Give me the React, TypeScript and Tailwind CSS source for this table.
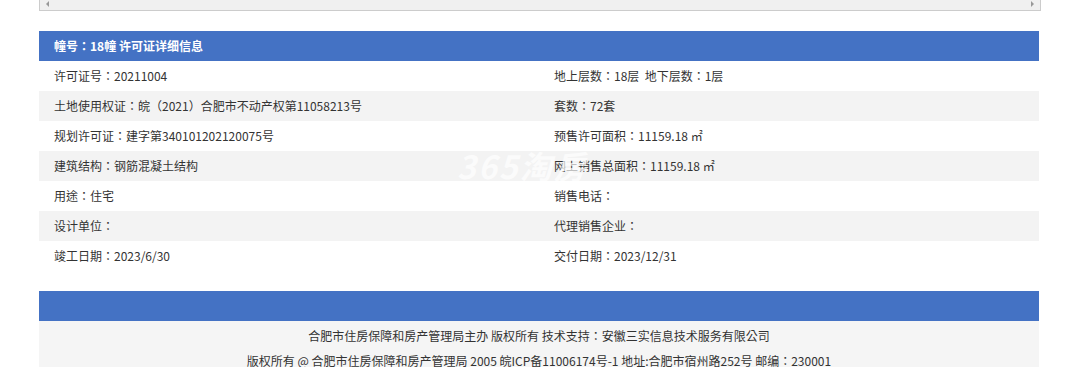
import React from 'react';

const rows: [string, string][] = [
  ['许可证号：20211004', '地上层数：18层\u00a0\u00a0地下层数：1层'],
  ['土地使用权证：皖（2021）合肥市不动产权第11058213号', '套数：72套'],
  ['规划许可证：建字第340101202120075号', '预售许可面积：11159.18 ㎡'],
  ['建筑结构：钢筋混凝土结构', '网上销售总面积：11159.18 ㎡'],
  ['用途：住宅', '销售电话：'],
  ['设计单位：', '代理销售企业：'],
  ['竣工日期：2023/6/30', '交付日期：2023/12/31'],
];

export default function App() {
  return (
    <div
      className="w-[1083px] h-[367px] overflow-hidden bg-white text-[12px] text-[#333]"
      style={{ fontFamily: '"Microsoft YaHei", "Noto Sans CJK TC", "Noto Sans", sans-serif' }}
    >
      {/* 横向滚动条 */}
      <div className="ml-[39px] w-[1002px] h-[11px] bg-[#f0f0f0] border-l border-r border-b border-[#cccccc] flex items-start justify-between px-[6px]">
        <span className="mt-[1px] w-0 h-0 border-t-[3px] border-b-[3px] border-r-[3px] border-t-transparent border-b-transparent border-r-[#999]" />
        <span className="mt-[1px] w-0 h-0 border-t-[3px] border-b-[3px] border-l-[3px] border-t-transparent border-b-transparent border-l-[#999]" />
      </div>

      <div className="ml-[39px] w-[1000px] mt-[20px] relative">
        <div className="h-[30px] bg-[#4472c4] text-white font-bold flex items-center pl-[15px]">
          幢号：18幢 许可证详细信息
        </div>
        {rows.map((r, i) => (
          <div key={i} className={`h-[30px] flex items-center ${i % 2 === 1 ? 'bg-[#f3f3f3]' : 'bg-white'}`}>
            <div className="w-[500px] pl-[15px]">{r[0]}</div>
            <div className="w-[500px] pl-[15px]">{r[1]}</div>
          </div>
        ))}
        {/* 水印 */}
        <div className="absolute left-[418px] top-[116px] text-[32px] leading-[36px] font-bold italic text-white/70 pointer-events-none tracking-[2px]">
          365淘房
        </div>
      </div>

      {/* 页脚 */}
      <div className="ml-[39px] w-[1000px] mt-[20px]">
        <div className="h-[30px] bg-[#4472c4]" />
        <div className="bg-[#f5f5f5] text-center pt-[2px]">
          <p className="leading-[25px]">合肥市住房保障和房产管理局主办 版权所有 技术支持：安徽三实信息技术服务有限公司</p>
          <p className="leading-[25px]">版权所有 @ 合肥市住房保障和房产管理局 2005 皖ICP备11006174号-1 地址:合肥市宿州路252号 邮编：230001</p>
        </div>
      </div>
    </div>
  );
}
